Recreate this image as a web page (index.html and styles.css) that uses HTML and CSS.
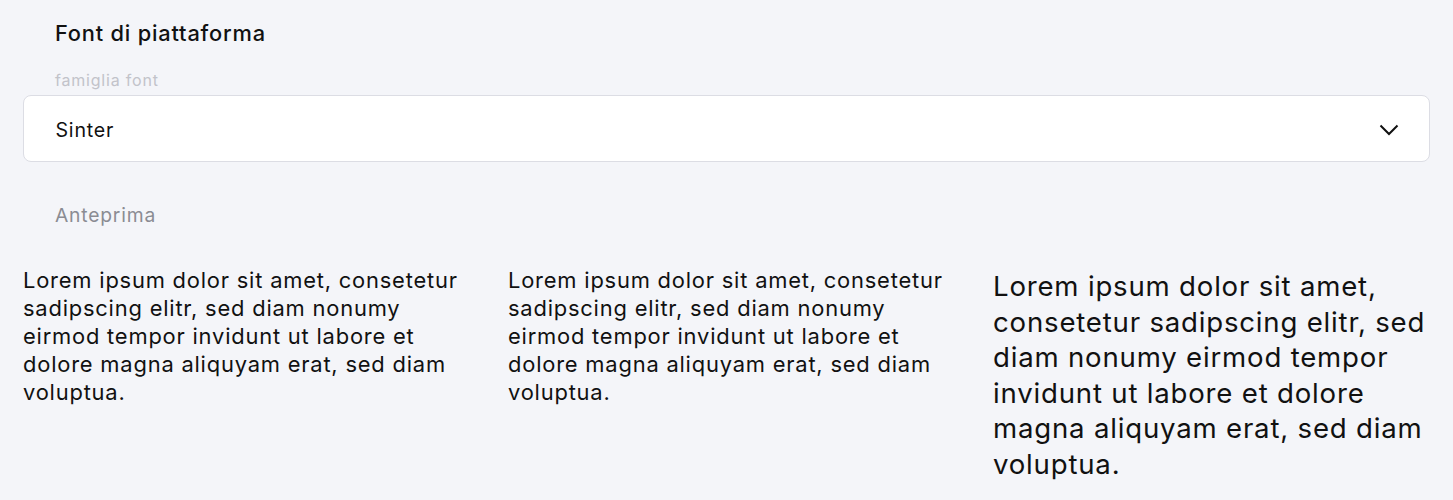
FILE: index.html
```html
<!DOCTYPE html>
<html lang="it">
<head>
<meta charset="utf-8">
<title>Font di piattaforma</title>
<link rel="stylesheet" href="styles.css">
</head>
<body>
<div class="page">
  <h2 class="title">Font di piattaforma</h2>
  <div class="field">
    <label class="label">famiglia font</label>
    <div class="select">
      <span class="value">Sinter</span>
      <svg class="chevron" width="20" height="12" viewBox="0 0 20 12"><path d="M1.5 1.5 L10 10 L18.5 1.5" fill="none" stroke="#111" stroke-width="2"/></svg>
    </div>
  </div>
  <div class="preview-label">Anteprima</div>
  <div class="preview">
    <p class="sample s1">Lorem ipsum dolor sit amet, consetetur sadipscing elitr, sed diam nonumy eirmod tempor invidunt ut labore et dolore magna aliquyam erat, sed diam voluptua.</p>
    <p class="sample s2">Lorem ipsum dolor sit amet, consetetur sadipscing elitr, sed diam nonumy eirmod tempor invidunt ut labore et dolore magna aliquyam erat, sed diam voluptua.</p>
    <p class="sample s3">Lorem ipsum dolor sit amet, consetetur sadipscing elitr, sed diam nonumy eirmod tempor invidunt ut labore et dolore magna aliquyam erat, sed diam voluptua.</p>
  </div>
</div>
</body>
</html>
```
FILE: styles.css
```css
html, body {
  margin: 0;
  padding: 0;
  background: #f4f5f9;
}
body {
  font-family: Inter, "Noto Sans", sans-serif;
  color: #111;
  letter-spacing: 0.05em;
}
.page {
  padding: 19px 23px 0 23px;
}
.title {
  margin: 0 0 0 32px;
  font-size: 21.8px;
  font-weight: 500;
  line-height: 28px;
}
.field {
  margin-top: 23px;
}
.label {
  display: block;
  margin-left: 32px;
  font-size: 16px;
  line-height: 20px;
  color: #c2c3ca;
}
.select {
  margin-top: 5px;
  box-sizing: border-box;
  height: 67px;
  background: #fff;
  border: 1.5px solid #dcdde4;
  border-radius: 8px;
  display: flex;
  align-items: center;
  justify-content: space-between;
  padding: 2px 30px 0 31.5px;
}
.value {
  font-size: 19.6px;
}
.chevron {
  display: block;
}
.preview-label {
  margin: 41px 0 0 32px;
  font-size: 19.3px;
  line-height: 24px;
  color: #8b8c93;
}
.preview {
  display: grid;
  grid-template-columns: repeat(3, 1fr);
  column-gap: 48px;
  margin-top: 39px;
  align-items: start;
}
.sample {
  margin: 0;
}
.s1, .s2 {
  font-size: 21.9px;
  line-height: 28px;
}
.s3 {
  margin-top: 3px;
  font-size: 27.6px;
  line-height: 35.5px;
}
```
